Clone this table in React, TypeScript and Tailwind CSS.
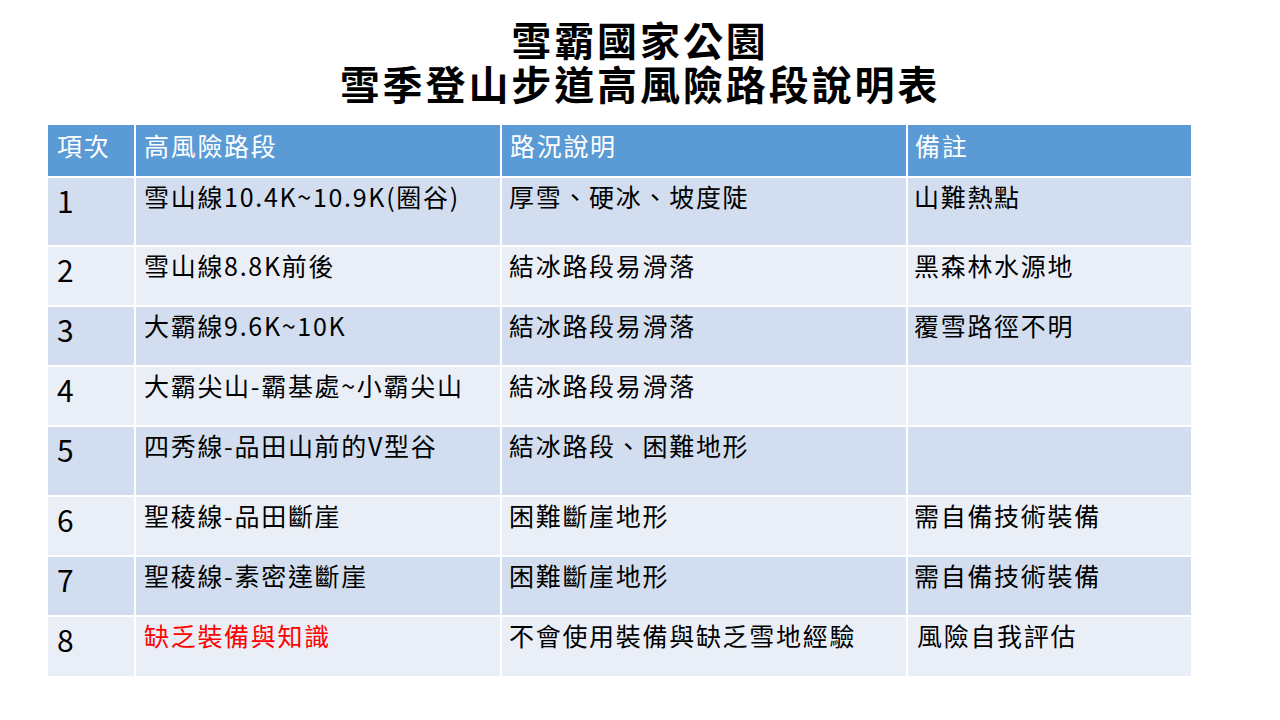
import React from "react";

const rows: { n: string; a: string; b: string; c: string; red?: boolean; cPad?: boolean }[] = [
  { n: "1", a: "雪山線10.4K~10.9K(圈谷)", b: "厚雪、硬冰、坡度陡", c: "山難熱點" },
  { n: "2", a: "雪山線8.8K前後", b: "結冰路段易滑落", c: "黑森林水源地" },
  { n: "3", a: "大霸線9.6K~10K", b: "結冰路段易滑落", c: "覆雪路徑不明" },
  { n: "4", a: "大霸尖山-霸基處~小霸尖山", b: "結冰路段易滑落", c: "" },
  { n: "5", a: "四秀線-品田山前的V型谷", b: "結冰路段、困難地形", c: "" },
  { n: "6", a: "聖稜線-品田斷崖", b: "困難斷崖地形", c: "需自備技術裝備" },
  { n: "7", a: "聖稜線-素密達斷崖", b: "困難斷崖地形", c: "需自備技術裝備" },
  { n: "8", a: "缺乏裝備與知識", b: "不會使用裝備與缺乏雪地經驗", c: "風險自我評估", red: true, cPad: true },
];

export default function App() {
  const font = { fontFamily: '"Noto Sans CJK TC", "Noto Sans", sans-serif' };
  return (
    <div className="w-[1280px] h-[720px] bg-white overflow-hidden" style={font}>
      <h1 className="pt-[17px] text-center font-bold text-[40px] leading-[44px] tracking-[2.9px] text-black">
        雪霸國家公園
        <br />
        雪季登山步道高風險路段說明表
      </h1>
      <div className="mt-[20px] ml-[48px] grid grid-cols-[86px_364px_404px_283px] grid-rows-[51px_67px_58px_58px_58px_68px_58px_58px_59px] gap-[2px] w-[1143px]">
        {["項次", "高風險路段", "路況說明", "備註"].map((h, i) => (
          <div
            key={h}
            className={`bg-[#5b9bd5] text-white text-[25px] leading-[32px] tracking-[1.7px] pt-[4px] ${i === 3 ? "pl-[7px]" : i === 0 ? "pl-[9px]" : "pl-[8px]"}`}
          >
            {h}
          </div>
        ))}
        {rows.map((r, i) => {
          const bg = i % 2 === 0 ? "bg-[#d2deef]" : "bg-[#eaeff7]";
          return (
            <React.Fragment key={r.n}>
              <div className={`${bg} text-black text-[30px] leading-[36px] pl-[9px] pt-[4px]`}>{r.n}</div>
              <div className={`${bg} ${r.red ? "text-[#ff0000]" : "text-black"} text-[25px] leading-[32px] tracking-[1.7px] pl-[8px] pt-[2px] whitespace-nowrap`}>
                {r.a}
              </div>
              <div className={`${bg} text-black text-[25px] leading-[32px] tracking-[1.7px] pl-[7px] pt-[2px] whitespace-nowrap`}>
                {r.b}
              </div>
              <div className={`${bg} text-black text-[25px] leading-[32px] tracking-[1.7px] ${r.cPad ? "pl-[9px]" : "pl-[6px]"} pt-[2px] whitespace-nowrap`}>
                {r.c}
              </div>
            </React.Fragment>
          );
        })}
      </div>
    </div>
  );
}
